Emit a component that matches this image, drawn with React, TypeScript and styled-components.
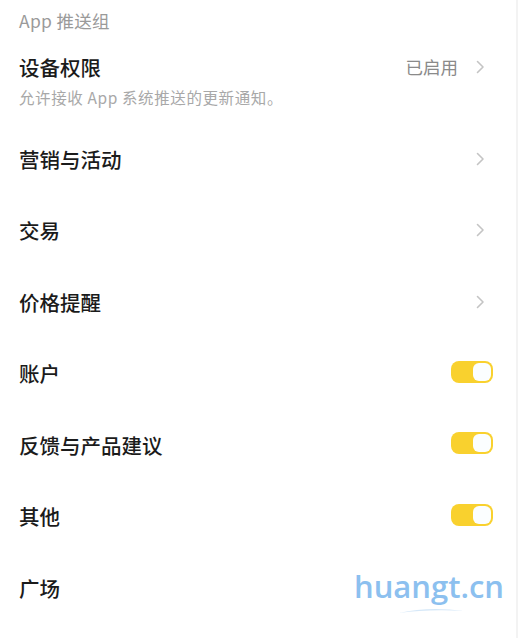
import React from "react";
import styled, { createGlobalStyle } from "styled-components";

const Global = createGlobalStyle`
  html, body { margin: 0; padding: 0; background: #ffffff; }
  body { font-family: "Noto Sans CJK SC", "Noto Sans", Inter, sans-serif; -webkit-font-smoothing: antialiased; }
`;

const Page = styled.div`
  position: relative;
  width: 518px;
  height: 638px;
  box-sizing: border-box;
  background: #ffffff;
  border-right: 2px solid #f3f3f3;
  overflow: hidden;
`;

const GroupHeader = styled.div`
  height: 40px;
  display: flex;
  align-items: center;
  padding-left: 19px;
  font-size: 17.5px;
  color: #9a9a9a;
  letter-spacing: 0.3px;
`;

const DetailRow = styled.div`
  display: grid;
  grid-template-columns: 1fr auto;
  grid-template-rows: 28px 20px;
  row-gap: 6px;
  padding: 13px 23px 16px 19px;
  height: 83px;
  box-sizing: border-box;
`;

const Title = styled.div`
  font-size: 20.5px;
  font-weight: 500;
  color: #1b1b1b;
  line-height: 28px;
`;

const Subtitle = styled.div`
  grid-column: 1 / span 2;
  font-size: 15.5px;
  letter-spacing: 0.6px;
  color: #a8a8a8;
  line-height: 20px;
  white-space: nowrap;
`;

const Trailing = styled.div`
  display: flex;
  align-items: center;
  gap: 14px;
  height: 28px;
`;

const Status = styled.span`
  font-size: 17.5px;
  color: #8a8a8a;
  line-height: 28px;
`;

const Row = styled.div`
  height: 71.5px;
  display: flex;
  align-items: center;
  justify-content: space-between;
  padding: 0 23px 0 19px;
`;

const ChevronBox = styled.span`
  display: inline-flex;
  width: 16px;
  justify-content: center;
  margin-right: 5px;
`;

const Toggle = styled.span<{ $on: boolean }>`
  display: inline-flex;
  align-items: center;
  justify-content: ${(p) => (p.$on ? "flex-end" : "flex-start")};
  width: 42px;
  height: 22px;
  box-sizing: border-box;
  padding: 2px;
  border-radius: 8px;
  background: ${(p) => (p.$on ? "#f9d12e" : "#e6e6e6")};
  margin-top: -3px;
`;

const Knob = styled.span`
  width: 18px;
  height: 18px;
  border-radius: 6px;
  background: #fbfeff;
`;

const Watermark = styled.div`
  position: absolute;
  left: 348px;
  top: 566px;
  width: 162px;
  height: 56px;
  display: flex;
  flex-direction: column;
  align-items: center;
  background: #ffffff;
`;

const WatermarkText = styled.span`
  font-family: "Open Sans", "Noto Sans", sans-serif;
  font-size: 31px;
  font-weight: 600;
  color: #8cc0ef;
  line-height: 40px;
  letter-spacing: 0px;
`;

const Chevron = () => (
  <svg width="9" height="14" viewBox="0 0 9 14" fill="none">
    <path d="M1.5 1.5L7 7L1.5 12.5" stroke="#c4c4c4" strokeWidth="1.6" strokeLinecap="round" strokeLinejoin="round" />
  </svg>
);

type Item = { label: string; kind: "link" | "toggle" | "none" };

const items: Item[] = [
  { label: "营销与活动", kind: "link" },
  { label: "交易", kind: "link" },
  { label: "价格提醒", kind: "link" },
  { label: "账户", kind: "toggle" },
  { label: "反馈与产品建议", kind: "toggle" },
  { label: "其他", kind: "toggle" },
  { label: "广场", kind: "none" },
];

export default function App() {
  return (
    <Page>
      <Global />
      <GroupHeader>App 推送组</GroupHeader>
      <DetailRow>
        <Title>设备权限</Title>
        <Trailing>
          <Status>已启用</Status>
          <ChevronBox>
            <Chevron />
          </ChevronBox>
        </Trailing>
        <Subtitle>允许接收 App 系统推送的更新通知。</Subtitle>
      </DetailRow>
      {items.map((it) => (
        <Row key={it.label}>
          <Title>{it.label}</Title>
          {it.kind === "link" && (
            <ChevronBox>
              <Chevron />
            </ChevronBox>
          )}
          {it.kind === "toggle" && (
            <Toggle $on>
              <Knob />
            </Toggle>
          )}
        </Row>
      ))}
      <Watermark>
        <WatermarkText>huangt.cn</WatermarkText>
        <svg width="120" height="8" viewBox="0 0 120 8">
          <path d="M30 7 Q60 0 95 5 Q60 3 30 7 Z" fill="#d6e8f8" />
        </svg>
      </Watermark>
    </Page>
  );
}
